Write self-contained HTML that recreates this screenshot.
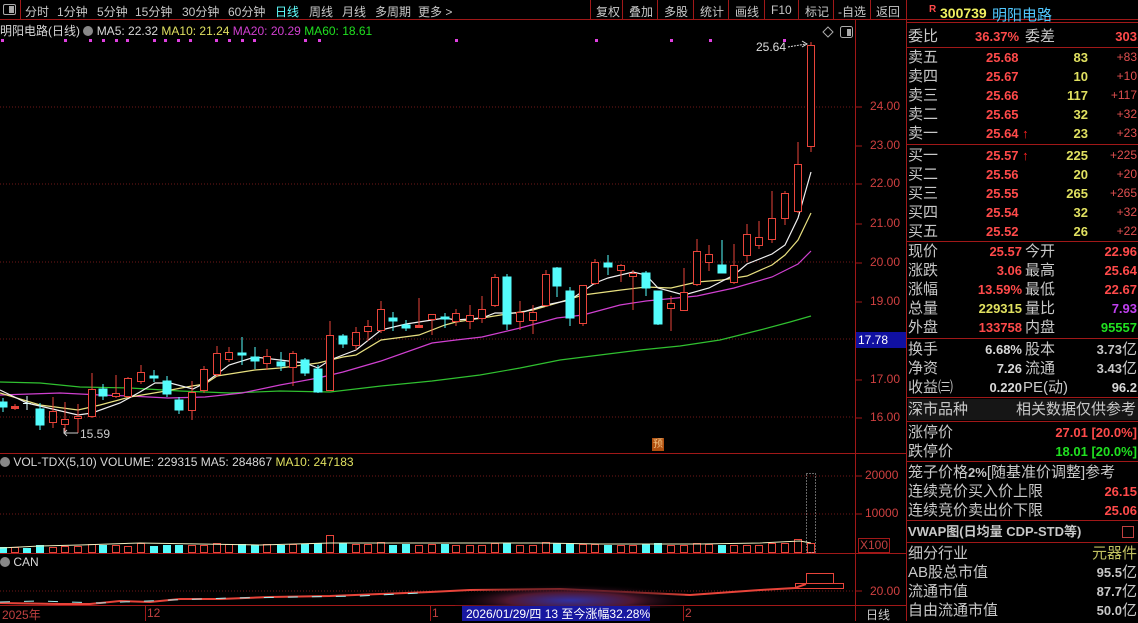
<!DOCTYPE html>
<html><head><meta charset="utf-8">
<style>
*{margin:0;padding:0;box-sizing:border-box}
body{width:1138px;height:621px;background:#000;overflow:hidden;position:relative;font-family:"Liberation Sans","Noto Sans CJK SC",sans-serif;color:#c8c8c8}
.a{position:absolute;white-space:nowrap}
.box{position:absolute;left:0;top:0;width:1138px;height:621px}
.tb{font-size:12px;top:3px;color:#c8c8c8}
.rp{font-size:15px;line-height:19px}
.r{color:#ff4a4a}.y{color:#e0e060}.g{color:#20e020}.w{color:#d8d8d8}
.lbl{left:908px}
</style></head><body>
<div class="a" style="left:0;top:0;width:1138px;height:20px;background:#000;border-bottom:1px solid #a01818"></div>
<div class="a" style="left:3px;top:4px;width:13px;height:11px;border:1px solid #aaa;border-radius:2px"></div>
<div class="a" style="left:9px;top:6px;width:5px;height:7px;background:#aaa"></div>
<div class="a" style="left:20px;top:0;width:1px;height:20px;background:#a01818"></div>
<div class="a tb" style="left:25px">分时</div>
<div class="a tb" style="left:57px">1分钟</div>
<div class="a tb" style="left:97px">5分钟</div>
<div class="a tb" style="left:135px">15分钟</div>
<div class="a tb" style="left:182px">30分钟</div>
<div class="a tb" style="left:228px">60分钟</div>
<div class="a tb" style="left:275px;color:#60ffff">日线</div>
<div class="a tb" style="left:309px">周线</div>
<div class="a tb" style="left:342px">月线</div>
<div class="a tb" style="left:375px">多周期</div>
<div class="a tb" style="left:418px">更多 &gt;</div>
<div class="a tb" style="left:596px">复权</div>
<div class="a tb" style="left:629px">叠加</div>
<div class="a tb" style="left:664px">多股</div>
<div class="a tb" style="left:700px">统计</div>
<div class="a tb" style="left:735px">画线</div>
<div class="a tb" style="left:771px">F10</div>
<div class="a tb" style="left:805px">标记</div>
<div class="a tb" style="left:838px">-自选</div>
<div class="a tb" style="left:876px">返回</div>
<svg class="a" style="left:0;top:0" width="1138" height="621">
<g stroke="#a01818" stroke-width="1">
<line x1="590.5" y1="0" x2="590.5" y2="20"/><line x1="622.5" y1="0" x2="622.5" y2="20"/><line x1="657.5" y1="0" x2="657.5" y2="20"/><line x1="693.5" y1="0" x2="693.5" y2="20"/><line x1="728.5" y1="0" x2="728.5" y2="20"/><line x1="764.5" y1="0" x2="764.5" y2="20"/><line x1="798.5" y1="0" x2="798.5" y2="20"/><line x1="833.5" y1="0" x2="833.5" y2="20"/><line x1="870.5" y1="0" x2="870.5" y2="20"/>
<line x1="906.5" y1="0" x2="906.5" y2="621"/>
<line x1="855.5" y1="20" x2="855.5" y2="621"/>
<line x1="0" y1="453.5" x2="906" y2="453.5"/>
<line x1="0" y1="553.5" x2="906" y2="553.5"/>
<line x1="0" y1="605.5" x2="906" y2="605.5"/>
<line x1="145.5" y1="605" x2="145.5" y2="621"/><line x1="430.5" y1="605" x2="430.5" y2="621"/><line x1="683.5" y1="605" x2="683.5" y2="621"/>
</g>
<g stroke="#701818" stroke-dasharray="1,2">
<line x1="0" y1="107" x2="855" y2="107"/><line x1="0" y1="184" x2="855" y2="184"/><line x1="0" y1="262" x2="855" y2="262"/><line x1="0" y1="339" x2="855" y2="339"/><line x1="0" y1="417" x2="855" y2="417"/>
<line x1="0" y1="476" x2="855" y2="476"/><line x1="0" y1="514" x2="855" y2="514"/><line x1="0" y1="591" x2="855" y2="591"/>
</g>
<g stroke="#a01818"><line x1="855" y1="107" x2="862" y2="107"/><line x1="855" y1="146" x2="862" y2="146"/><line x1="855" y1="184" x2="862" y2="184"/><line x1="855" y1="224" x2="862" y2="224"/><line x1="855" y1="263" x2="862" y2="263"/><line x1="855" y1="302" x2="862" y2="302"/><line x1="855" y1="380" x2="862" y2="380"/><line x1="855" y1="418" x2="862" y2="418"/><line x1="855" y1="476" x2="862" y2="476"/><line x1="855" y1="514" x2="862" y2="514"/><line x1="855" y1="591" x2="862" y2="591"/></g>
<g fill="#e040e0"><rect x="1" y="39" width="3" height="3"/><rect x="64" y="39" width="3" height="3"/><rect x="89" y="39" width="3" height="3"/><rect x="102" y="39" width="3" height="3"/><rect x="115" y="39" width="3" height="3"/><rect x="126" y="39" width="3" height="3"/><rect x="153" y="39" width="3" height="3"/><rect x="164" y="39" width="3" height="3"/><rect x="177" y="39" width="3" height="3"/><rect x="189" y="39" width="3" height="3"/><rect x="215" y="39" width="3" height="3"/><rect x="228" y="39" width="3" height="3"/><rect x="241" y="39" width="3" height="3"/><rect x="253" y="39" width="3" height="3"/><rect x="304" y="39" width="3" height="3"/><rect x="318" y="39" width="3" height="3"/><rect x="455" y="39" width="3" height="3"/><rect x="595" y="39" width="3" height="3"/><rect x="670" y="39" width="3" height="3"/><rect x="709" y="39" width="3" height="3"/><rect x="783" y="39" width="3" height="3"/></g>
<g fill="none" stroke-width="1.2">
<polyline stroke="#30c030" points="0,382 40,383 80,387 130,388 180,391 230,393 280,391 330,392 381,386 432,381 480,375 520,368 560,360 600,355 640,350 680,346 720,340 760,330 790,322 811,316"/>
<polyline stroke="#d040d0" points="0,395 60,393 100,395 130,396 168,398 205,397 242,393 280,385 318,378 343,372 381,361 432,343 456,340 482,337 520,328 557,318 583,315 620,305 646,301 697,296 734,288 772,277 798,264 811,251"/>
<polyline stroke="#e8e080" points="0,393 40,405 78,410 100,405 130,397 160,392 192,386 205,384 217,376 255,370 280,368 318,363 343,357 356,355 381,340 419,335 445,325 456,322 482,318 507,314 533,310 557,303 583,295 621,290 646,287 671,288 697,282 722,280 747,276 772,265 785,255 798,240 811,213"/>
<polyline stroke="#f0f0f0" points="0,390 27,403 78,415 92,413 120,403 140,392 155,383 170,383 193,389 205,383 229,365 255,357 280,360 305,363 318,368 330,360 356,350 381,330 406,324 445,318 456,320 482,318 495,313 520,313 546,305 570,300 595,283 608,278 633,272 646,275 658,288 684,295 709,288 734,275 747,264 772,254 785,245 798,218 811,172"/>
</g>
<g stroke="#54fcfc" fill="#54fcfc">
<line x1="3" y1="398" x2="3" y2="412"/><rect x="-1" y="402" width="8" height="5"/>
<line x1="27" y1="396" x2="27" y2="410" stroke="#e0ffff"/><line x1="23" y1="403.5" x2="31" y2="403.5" stroke="#e0ffff"/>
<line x1="40" y1="403" x2="40" y2="430"/><rect x="36" y="409" width="8" height="16"/>
<line x1="103" y1="384" x2="103" y2="400"/><rect x="99" y="389" width="8" height="7"/>
<line x1="154" y1="370" x2="154" y2="382"/><rect x="150" y="376" width="8" height="2"/>
<line x1="167" y1="376" x2="167" y2="397"/><rect x="163" y="381" width="8" height="13"/>
<line x1="179" y1="397" x2="179" y2="414"/><rect x="175" y="400" width="8" height="10"/>
<line x1="242" y1="337" x2="242" y2="365"/><rect x="238" y="353" width="8" height="2"/>
<line x1="255" y1="347" x2="255" y2="369"/><rect x="251" y="357" width="8" height="4"/>
<line x1="281" y1="352" x2="281" y2="371"/><rect x="277" y="362" width="8" height="4"/>
<line x1="305" y1="358" x2="305" y2="376"/><rect x="301" y="360" width="8" height="13"/>
<line x1="318" y1="365" x2="318" y2="393"/><rect x="314" y="369" width="8" height="23"/>
<line x1="343" y1="334" x2="343" y2="348"/><rect x="339" y="336" width="8" height="8"/>
<line x1="393" y1="312" x2="393" y2="331"/><rect x="389" y="318" width="8" height="3"/>
<line x1="406" y1="320" x2="406" y2="331"/><rect x="402" y="325" width="8" height="3"/>
<line x1="445" y1="313" x2="445" y2="328"/><rect x="441" y="317" width="8" height="2"/>
<line x1="507" y1="274" x2="507" y2="330"/><rect x="503" y="277" width="8" height="47"/>
<line x1="557" y1="267" x2="557" y2="297"/><rect x="553" y="268" width="8" height="18"/>
<line x1="570" y1="287" x2="570" y2="326"/><rect x="566" y="291" width="8" height="27"/>
<line x1="608" y1="255" x2="608" y2="275"/><rect x="604" y="263" width="8" height="4"/>
<line x1="646" y1="271" x2="646" y2="296"/><rect x="642" y="273" width="8" height="15"/>
<line x1="658" y1="291" x2="658" y2="325"/><rect x="654" y="291" width="8" height="33"/>
<line x1="722" y1="240" x2="722" y2="273"/><rect x="718" y="265" width="8" height="8"/>
</g>
<g stroke="#e8443a" fill="#000">
<line x1="15" y1="404" x2="15" y2="410"/><rect x="11.5" y="406.5" width="7" height="2" fill="#e8443a"/>
<line x1="53" y1="397" x2="53" y2="428"/><rect x="49.5" y="411.5" width="7" height="11"/>
<line x1="65" y1="402" x2="65" y2="432"/><rect x="61.5" y="419.5" width="7" height="5"/>
<line x1="78" y1="404" x2="78" y2="433"/><rect x="74.5" y="416.5" width="7" height="2"/>
<line x1="92" y1="373" x2="92" y2="418"/><rect x="88.5" y="389.5" width="7" height="27"/>
<line x1="116" y1="375" x2="116" y2="398"/><rect x="112.5" y="393.5" width="7" height="3"/>
<line x1="128" y1="377" x2="128" y2="398"/><rect x="124.5" y="378.5" width="7" height="18"/>
<line x1="141" y1="365" x2="141" y2="384"/><rect x="137.5" y="372.5" width="7" height="9"/>
<line x1="192" y1="381" x2="192" y2="420"/><rect x="188.5" y="392.5" width="7" height="18"/>
<line x1="204" y1="366" x2="204" y2="393"/><rect x="200.5" y="369.5" width="7" height="21"/>
<line x1="217" y1="346" x2="217" y2="377"/><rect x="213.5" y="353.5" width="7" height="21"/>
<line x1="229" y1="347" x2="229" y2="362"/><rect x="225.5" y="352.5" width="7" height="7"/>
<line x1="267" y1="349" x2="267" y2="370"/><rect x="263.5" y="356.5" width="7" height="7"/>
<line x1="293" y1="351" x2="293" y2="386"/><rect x="289.5" y="353.5" width="7" height="14"/>
<line x1="330" y1="321" x2="330" y2="391"/><rect x="326.5" y="335.5" width="7" height="55"/>
<line x1="356" y1="327" x2="356" y2="350"/><rect x="352.5" y="332.5" width="7" height="13"/>
<line x1="368" y1="320" x2="368" y2="341"/><rect x="364.5" y="326.5" width="7" height="5"/>
<line x1="381" y1="301" x2="381" y2="333"/><rect x="377.5" y="309.5" width="7" height="21"/>
<line x1="419" y1="298" x2="419" y2="327"/><rect x="415.5" y="325.5" width="7" height="2" fill="#e8443a"/>
<line x1="432" y1="314" x2="432" y2="335"/><rect x="428.5" y="314.5" width="7" height="5"/>
<line x1="456" y1="309" x2="456" y2="326"/><rect x="452.5" y="313.5" width="7" height="8"/>
<line x1="470" y1="305" x2="470" y2="329"/><rect x="466.5" y="315.5" width="7" height="6"/>
<line x1="482" y1="296" x2="482" y2="323"/><rect x="478.5" y="309.5" width="7" height="9"/>
<line x1="495" y1="274" x2="495" y2="307"/><rect x="491.5" y="277.5" width="7" height="28"/>
<line x1="520" y1="301" x2="520" y2="330"/><rect x="516.5" y="312.5" width="7" height="9"/>
<line x1="533" y1="305" x2="533" y2="334"/><rect x="529.5" y="312.5" width="7" height="8"/>
<line x1="546" y1="270" x2="546" y2="307"/><rect x="542.5" y="274.5" width="7" height="31"/>
<line x1="583" y1="285" x2="583" y2="326"/><rect x="579.5" y="285.5" width="7" height="38"/>
<line x1="595" y1="259" x2="595" y2="285"/><rect x="591.5" y="262.5" width="7" height="21"/>
<line x1="621" y1="264" x2="621" y2="282"/><rect x="617.5" y="265.5" width="7" height="5"/>
<line x1="633" y1="270" x2="633" y2="310"/><rect x="629.5" y="273.5" width="7" height="3"/>
<line x1="671" y1="296" x2="671" y2="331"/><rect x="667.5" y="303.5" width="7" height="5"/>
<line x1="684" y1="268" x2="684" y2="310"/><rect x="680.5" y="292.5" width="7" height="18"/>
<line x1="697" y1="239" x2="697" y2="286"/><rect x="693.5" y="251.5" width="7" height="33"/>
<line x1="709" y1="245" x2="709" y2="271"/><rect x="705.5" y="254.5" width="7" height="8"/>
<line x1="734" y1="244" x2="734" y2="284"/><rect x="730.5" y="265.5" width="7" height="17"/>
<line x1="747" y1="224" x2="747" y2="262"/><rect x="743.5" y="234.5" width="7" height="21"/>
<line x1="759" y1="221" x2="759" y2="249"/><rect x="755.5" y="237.5" width="7" height="8"/>
<line x1="772" y1="191" x2="772" y2="243"/><rect x="768.5" y="218.5" width="7" height="21"/>
<line x1="785" y1="191" x2="785" y2="225"/><rect x="781.5" y="193.5" width="7" height="25"/>
<line x1="798" y1="142" x2="798" y2="213"/><rect x="794.5" y="164.5" width="7" height="47"/>
<line x1="811" y1="42" x2="811" y2="152"/><rect x="807.5" y="45.5" width="7" height="101"/>
</g>
<polyline points="788,47 806,44" stroke="#ddd" fill="none" stroke-dasharray="2,1"/><path d="M802,41 L807,44 L802,47" stroke="#ddd" fill="none"/>
<polyline points="64,428 64,433 78,433" stroke="#ccc" fill="none"/><path d="M67,430 L64,433 L67,436" stroke="#ccc" fill="none"/>
<path d="M828,27 L833,32 L828,37 L823,32Z" stroke="#aaa" fill="none"/>
<rect x="840.5" y="26.5" width="12" height="11" rx="2" stroke="#aaa" fill="none"/><rect x="847" y="29" width="4" height="7" fill="#aaa"/>
<g stroke="#e8443a" fill="#000">
<rect x="11.5" y="547.5" width="7" height="5"/><rect x="49.5" y="547.5" width="7" height="5"/><rect x="61.5" y="546.5" width="7" height="6"/><rect x="74.5" y="546.5" width="7" height="6"/><rect x="88.5" y="544.5" width="7" height="8"/><rect x="112.5" y="545.5" width="7" height="7"/><rect x="124.5" y="546.5" width="7" height="6"/><rect x="137.5" y="543.5" width="7" height="9"/><rect x="188.5" y="545.5" width="7" height="7"/><rect x="200.5" y="545.5" width="7" height="7"/><rect x="213.5" y="543.5" width="7" height="9"/><rect x="225.5" y="544.5" width="7" height="8"/><rect x="263.5" y="544.5" width="7" height="8"/><rect x="289.5" y="544.5" width="7" height="8"/><rect x="326.5" y="535.5" width="7" height="17"/><rect x="352.5" y="544.5" width="7" height="8"/><rect x="364.5" y="544.5" width="7" height="8"/><rect x="377.5" y="542.5" width="7" height="10"/><rect x="415.5" y="545.5" width="7" height="7"/><rect x="428.5" y="544.5" width="7" height="8"/><rect x="452.5" y="545.5" width="7" height="7"/><rect x="466.5" y="545.5" width="7" height="7"/><rect x="478.5" y="545.5" width="7" height="7"/><rect x="491.5" y="543.5" width="7" height="9"/><rect x="516.5" y="545.5" width="7" height="7"/><rect x="529.5" y="545.5" width="7" height="7"/><rect x="542.5" y="542.5" width="7" height="10"/><rect x="579.5" y="544.5" width="7" height="8"/><rect x="591.5" y="544.5" width="7" height="8"/><rect x="617.5" y="545.5" width="7" height="7"/><rect x="629.5" y="545.5" width="7" height="7"/><rect x="667.5" y="545.5" width="7" height="7"/><rect x="680.5" y="545.5" width="7" height="7"/><rect x="693.5" y="543.5" width="7" height="9"/><rect x="705.5" y="544.5" width="7" height="8"/><rect x="730.5" y="545.5" width="7" height="7"/><rect x="743.5" y="545.5" width="7" height="7"/><rect x="755.5" y="545.5" width="7" height="7"/><rect x="768.5" y="543.5" width="7" height="9"/><rect x="781.5" y="543.5" width="7" height="9"/><rect x="794.5" y="539.5" width="7" height="13"/><rect x="807.5" y="543.5" width="7" height="9"/>
</g>
<rect x="806.5" y="473.5" width="9" height="79" stroke="#ccc" fill="none" stroke-dasharray="1,2"/>
<g fill="#54fcfc">
<rect x="-1" y="547" width="8" height="6"/><rect x="23" y="548" width="8" height="5"/><rect x="36" y="545" width="8" height="8"/><rect x="99" y="545" width="8" height="8"/><rect x="150" y="546" width="8" height="7"/><rect x="163" y="545" width="8" height="8"/><rect x="175" y="545" width="8" height="8"/><rect x="238" y="544" width="8" height="9"/><rect x="251" y="545" width="8" height="8"/><rect x="277" y="545" width="8" height="8"/><rect x="301" y="544" width="8" height="9"/><rect x="314" y="543" width="8" height="10"/><rect x="339" y="543" width="8" height="10"/><rect x="389" y="545" width="8" height="8"/><rect x="402" y="544" width="8" height="9"/><rect x="441" y="544" width="8" height="9"/><rect x="503" y="543" width="8" height="10"/><rect x="553" y="543" width="8" height="10"/><rect x="566" y="543" width="8" height="10"/><rect x="604" y="545" width="8" height="8"/><rect x="642" y="544" width="8" height="9"/><rect x="654" y="543" width="8" height="10"/><rect x="718" y="545" width="8" height="8"/>
</g>
<polyline points="0,548 40,546 80,545 140,543 200,544 260,545 330,543 400,543 460,543 540,543 600,544 700,544 760,543 800,541 811,543" stroke="#f0f0c0" fill="none"/>
<polyline points="0,603 60,604 90,604 120,601 150,602 180,599 220,599 270,597 330,596 380,594 430,592 470,590 560,589 690,595 760,590 795,588 806,584" stroke="#e8443a" fill="none" stroke-width="2"/>
<polyline points="0,602 40,601 100,603 170,600 230,598 300,597 360,596 420,593" stroke="#a0f0f0" fill="none" stroke-dasharray="10,14"/>
<rect x="806.5" y="573.5" width="27" height="10" stroke="#e8443a" fill="none"/>
<rect x="795.5" y="583.5" width="48" height="5" stroke="#e8443a" fill="none"/>
<defs><radialGradient id="bl" cx="50%" cy="75%" r="55%"><stop offset="0" stop-color="#3030a0"/><stop offset="0.5" stop-color="#501830"/><stop offset="1" stop-color="#000" stop-opacity="0"/></radialGradient></defs>
<rect x="455" y="578" width="230" height="30" fill="url(#bl)"/>
<rect x="462" y="606" width="188" height="15" fill="#1818a0"/>
</svg>
<div class="a" style="left:0;top:22px;font-size:12px"><span class="w">明阳电路(日线)</span> <span style="display:inline-block;width:10px;height:10px;border-radius:5px;background:#888;vertical-align:-1px"></span> <span class="w">MA5: 22.32</span> <span class="y">MA10: 21.24</span> <span style="color:#d040d0">MA20: 20.29</span> <span class="g">MA60: 18.61</span></div>
<div class="a" style="left:756px;top:40px;font-size:12px;color:#ddd">25.64</div>
<div class="a" style="left:80px;top:427px;font-size:12px;color:#ccc">15.59</div>
<div class="a" style="left:652px;top:438px;width:12px;height:13px;background:#b05010;font-size:10px;color:#f0c080;text-align:center;line-height:13px">预</div>
<div class="a" style="left:0;top:455px;font-size:12px"><span style="display:inline-block;width:10px;height:10px;border-radius:5px;background:#888;vertical-align:-1px"></span> <span class="w">VOL-TDX(5,10) VOLUME: 229315 MA5: 284867</span> <span class="y">MA10: 247183</span></div>
<div class="a" style="left:0;top:555px;font-size:12px"><span style="display:inline-block;width:10px;height:10px;border-radius:5px;background:#888;vertical-align:-1px"></span> <span class="w">CAN</span></div>
<div class="a" style="left:466px;top:605px;font-size:12px;color:#fff">2026/01/29/四 13 至今涨幅32.28%</div>
<div class="a" style="left:2px;top:606px;font-size:12px;color:#c04040">2025年</div>
<div class="a" style="left:147px;top:606px;font-size:12px;color:#c04040">12</div>
<div class="a" style="left:432px;top:606px;font-size:12px;color:#c04040">1</div>
<div class="a" style="left:685px;top:606px;font-size:12px;color:#c04040">2</div>
<div class="a" style="left:866px;top:606px;font-size:12px;color:#ccc">日线</div>
<div class="a" style="left:870px;top:99px;font-size:12px;color:#d04040">24.00</div>
<div class="a" style="left:870px;top:138px;font-size:12px;color:#d04040">23.00</div>
<div class="a" style="left:870px;top:176px;font-size:12px;color:#d04040">22.00</div>
<div class="a" style="left:870px;top:216px;font-size:12px;color:#d04040">21.00</div>
<div class="a" style="left:870px;top:255px;font-size:12px;color:#d04040">20.00</div>
<div class="a" style="left:870px;top:294px;font-size:12px;color:#d04040">19.00</div>
<div class="a" style="left:856px;top:332px;width:50px;height:16px;background:#1010a0;font-size:12px;color:#fff;padding-left:2px;line-height:16px">17.78</div>
<div class="a" style="left:870px;top:372px;font-size:12px;color:#d04040">17.00</div>
<div class="a" style="left:870px;top:410px;font-size:12px;color:#d04040">16.00</div>
<div class="a" style="left:865px;top:468px;font-size:12px;color:#d04040">20000</div>
<div class="a" style="left:865px;top:506px;font-size:12px;color:#d04040">10000</div>
<div class="a" style="left:858px;top:538px;font-size:12px;color:#c04040;border:1px solid #a01818;padding:0 1px;line-height:13px">X100</div>
<div class="a" style="left:870px;top:584px;font-size:12px;color:#d04040">20.00</div>
<div class="a" style="left:907px;top:22px;width:231px;height:1px;background:#a01818"></div>
<div class="a" style="left:929px;top:4px;font-size:10px;color:#ff4a4a;font-weight:bold">R</div>
<div class="a" style="left:940px;top:5px;font-size:14px;font-weight:bold;color:#f0f060">300739</div>
<div class="a" style="left:992px;top:4px;font-size:15px;color:#50c8ff">明阳电路</div>
<div class="a" style="left:907px;top:47px;width:231px;height:1px;background:#a01818"></div>
<div class="a" style="left:907px;top:144px;width:231px;height:1px;background:#a01818"></div>
<div class="a" style="left:907px;top:241px;width:231px;height:1px;background:#a01818"></div>
<div class="a" style="left:907px;top:338px;width:231px;height:1px;background:#a01818"></div>
<div class="a" style="left:907px;top:397px;width:231px;height:1px;background:#a01818"></div>
<div class="a" style="left:907px;top:421px;width:231px;height:1px;background:#a01818"></div>
<div class="a" style="left:907px;top:461px;width:231px;height:1px;background:#a01818"></div>
<div class="a" style="left:907px;top:520px;width:231px;height:1px;background:#a01818"></div>
<div class="a" style="left:907px;top:542px;width:231px;height:1px;background:#a01818"></div>
<div class="a" style="left:908px;top:399px;width:230px;height:21px;background:#161616"></div>
<div class="box rp">
<div class="a lbl" style="top:27px">委比</div><div class="a" style="left:1025px;top:27px">委差</div>
<div class="a lbl" style="top:48px">卖五</div><div class="a lbl" style="top:67px">卖四</div><div class="a lbl" style="top:86px">卖三</div><div class="a lbl" style="top:105px">卖二</div><div class="a lbl" style="top:124px">卖一</div>
<div class="a lbl" style="top:146px">买一</div><div class="a lbl" style="top:165px">买二</div><div class="a lbl" style="top:184px">买三</div><div class="a lbl" style="top:203px">买四</div><div class="a lbl" style="top:222px">买五</div>
<div class="a lbl" style="top:242px">现价</div><div class="a lbl" style="top:261px">涨跌</div><div class="a lbl" style="top:280px">涨幅</div><div class="a lbl" style="top:299px">总量</div><div class="a lbl" style="top:318px">外盘</div>
<div class="a" style="left:1025px;top:242px">今开</div><div class="a" style="left:1025px;top:261px">最高</div><div class="a" style="left:1025px;top:280px">最低</div><div class="a" style="left:1025px;top:299px">量比</div><div class="a" style="left:1025px;top:318px">内盘</div>
<div class="a lbl" style="top:340px">换手</div><div class="a lbl" style="top:359px">净资</div><div class="a lbl" style="top:378px">收益㈢</div>
<div class="a" style="left:1025px;top:340px">股本</div><div class="a" style="left:1025px;top:359px">流通</div><div class="a" style="left:1023px;top:378px">PE(动)</div>
<div class="a lbl" style="top:400px">深市品种</div><div class="a" style="right:2px;top:400px">相关数据仅供参考</div>
<div class="a lbl" style="top:423px">涨停价</div><div class="a lbl" style="top:442px">跌停价</div>
<div class="a lbl" style="top:463px">笼子价格<b style="font-size:13px">2%</b>[随基准价调整]参考</div>
<div class="a lbl" style="top:482px">连续竞价买入价上限</div><div class="a lbl" style="top:501px">连续竞价卖出价下限</div>
<div class="a lbl" style="top:522px;font-weight:bold;font-size:13px">VWAP图(日均量 CDP-STD等)</div>
<div class="a lbl" style="top:544px">细分行业</div><div class="a" style="right:1px;top:544px;color:#c0c060">元器件</div>
<div class="a lbl" style="top:563px">AB股总市值</div><div class="a lbl" style="top:582px">流通市值</div><div class="a lbl" style="top:601px">自由流通市值</div>
<div class="a" style="right:1px;top:563px"><b style="font-size:13px">95.5</b>亿</div><div class="a" style="right:1px;top:582px"><b style="font-size:13px">87.7</b>亿</div><div class="a" style="right:1px;top:601px"><b style="font-size:13px">50.0</b>亿</div>
<div class="a" style="right:1px;top:340px"><b style="font-size:13px">3.73</b>亿</div><div class="a" style="right:1px;top:359px"><b style="font-size:13px">3.43</b>亿</div>
</div>
<div class="a" style="left:1122px;top:526px;width:12px;height:12px;border:1px solid #c04040"></div>
<div class="box" style="font-size:13px;font-weight:bold;line-height:19px">
<div class="a r" style="left:975px;top:27px">36.37%</div><div class="a r" style="right:1px;top:27px">303</div>
<div class="a r" style="left:986px;top:48px">25.68</div><div class="a r" style="left:986px;top:67px">25.67</div><div class="a r" style="left:986px;top:86px">25.66</div><div class="a r" style="left:986px;top:105px">25.65</div><div class="a r" style="left:986px;top:124px">25.64 <span style="color:#ff2020">↑</span></div>
<div class="a r" style="left:986px;top:146px">25.57 <span style="color:#ff2020">↑</span></div><div class="a r" style="left:986px;top:165px">25.56</div><div class="a r" style="left:986px;top:184px">25.55</div><div class="a r" style="left:986px;top:203px">25.54</div><div class="a r" style="left:986px;top:222px">25.52</div>
<div class="a y" style="right:50px;top:48px">83</div><div class="a y" style="right:50px;top:67px">10</div><div class="a y" style="right:50px;top:86px">117</div><div class="a y" style="right:50px;top:105px">32</div><div class="a y" style="right:50px;top:124px">23</div>
<div class="a y" style="right:50px;top:146px">225</div><div class="a y" style="right:50px;top:165px">20</div><div class="a y" style="right:50px;top:184px">265</div><div class="a y" style="right:50px;top:203px">32</div><div class="a y" style="right:50px;top:222px">26</div>
<div class="a r" style="right:116px;top:242px">25.57</div><div class="a r" style="right:116px;top:261px">3.06</div><div class="a r" style="right:116px;top:280px">13.59%</div><div class="a y" style="right:116px;top:299px">229315</div><div class="a r" style="right:116px;top:318px">133758</div>
<div class="a r" style="right:1px;top:242px">22.96</div><div class="a r" style="right:1px;top:261px">25.64</div><div class="a r" style="right:1px;top:280px">22.67</div><div class="a" style="right:1px;top:299px;color:#c040f0">7.93</div><div class="a g" style="right:1px;top:318px">95557</div>
<div class="a w" style="right:116px;top:340px">6.68%</div><div class="a w" style="right:116px;top:359px">7.26</div><div class="a w" style="right:116px;top:378px">0.220</div><div class="a w" style="right:1px;top:378px">96.2</div>
<div class="a r" style="right:1px;top:423px">27.01 [20.0%]</div><div class="a g" style="right:1px;top:442px">18.01 [20.0%]</div>
<div class="a r" style="right:1px;top:482px">26.15</div><div class="a r" style="right:1px;top:501px">25.06</div>
</div>
<div class="box" style="font-size:12px;line-height:19px;color:#e05050">
<div class="a" style="right:1px;top:48px">+83</div><div class="a" style="right:1px;top:67px">+10</div><div class="a" style="right:1px;top:86px">+117</div><div class="a" style="right:1px;top:105px">+32</div><div class="a" style="right:1px;top:124px">+23</div>
<div class="a" style="right:1px;top:146px">+225</div><div class="a" style="right:1px;top:165px">+20</div><div class="a" style="right:1px;top:184px">+265</div><div class="a" style="right:1px;top:203px">+32</div><div class="a" style="right:1px;top:222px">+22</div>
</div>
</body></html>
